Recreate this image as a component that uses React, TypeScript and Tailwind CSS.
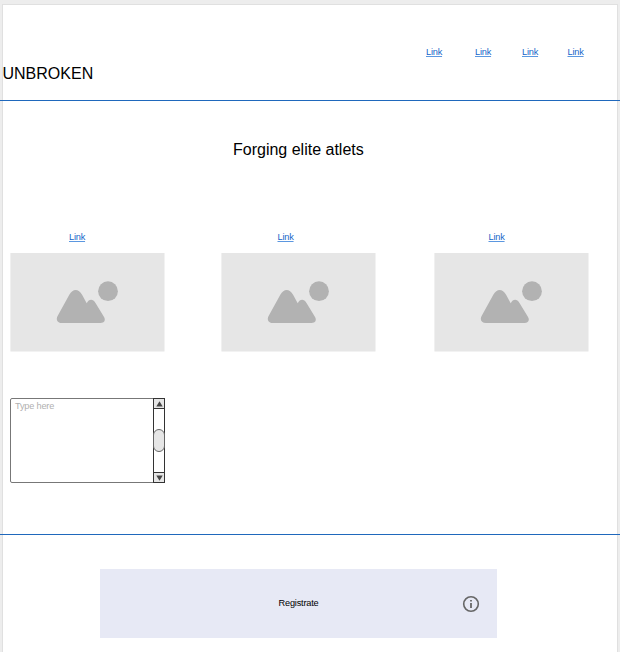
import React from "react";

function TextLink({ className = "" }: { className?: string }) {
  return (
    <a
      href="#"
      className={`block w-4 whitespace-nowrap text-[9.2px] leading-[10px] tracking-[-0.2px] text-[#1565c8] underline decoration-[#5b97e0] decoration-1 underline-offset-[0.5px] ${className}`}
    >
      Link
    </a>
  );
}

function ImagePlaceholder() {
  return (
    <svg className="block h-[99px] w-[155px]" viewBox="0 0 155 99" aria-hidden="true">
      <rect x="0.4" y="0" width="154.1" height="98.5" fill="#e6e6e6" />
      <circle cx="98" cy="38.2" r="9.9" fill="#b2b2b2" />
      <path
        d="M47.6 62.9 59.3 41.8C62.8 35.4 68.6 35.4 72.1 41.8L76.7 50.2C79.1 45.7 83 45.8 85.5 50L93.9 63.8C96 67.2 94.3 70 90.5 70H52C47.4 70 45.6 66.5 47.6 62.9Z"
        fill="#b2b2b2"
      />
    </svg>
  );
}

function Card({ className, linkClassName }: { className: string; linkClassName: string }) {
  return (
    <div className={`w-[155px] ${className}`}>
      <TextLink className={linkClassName} />
      <div className="mt-[11px]">
        <ImagePlaceholder />
      </div>
    </div>
  );
}

function ArrowButton({ down = false }: { down?: boolean }) {
  return (
    <div
      className={`flex h-[10px] shrink-0 items-center justify-center border-[#333] bg-[#e6e6e6] ${
        down ? "border-t" : "border-b"
      }`}
    >
      <svg className="h-[6px] w-[7px]" viewBox="0 0 7 6" aria-hidden="true">
        <path d={down ? "M0.3 0.5H6.7L3.5 5.7Z" : "M0.3 5.5H6.7L3.5 0.3Z"} fill="#444" />
      </svg>
    </div>
  );
}

function TextArea() {
  return (
    <div className="flex h-[85px] w-[155px] rounded-[2px] border border-[#777]">
      <div className="grow pl-1 pt-[2px] text-[9.2px] leading-[10px] tracking-[-0.2px] text-[#b0b0b0]">
        Type here
      </div>
      <div className="-m-px flex w-3 flex-col justify-between border border-[#333]">
        <ArrowButton />
        <div className="-mx-px h-[23px] rounded-[6px] border border-[#666] bg-[#e6e6e6]" />
        <ArrowButton down />
      </div>
    </div>
  );
}

export default function App() {
  return (
    <div className="flex h-[652px] w-[620px] flex-col overflow-hidden bg-[#ededed] pt-1 font-['Liberation_Sans',Arial,sans-serif] text-black">
      <header className="mx-[2px] h-24 shrink-0 border border-b-0 border-[#e0e0e0] bg-white">
        <nav className="flex pl-[423px] pt-[42px]">
          <TextLink />
          <TextLink className="ml-[33px]" />
          <TextLink className="ml-[31px]" />
          <TextLink className="ml-[29.5px]" />
        </nav>
        <h1 className="mt-[7px] -ml-[0.5px] text-base leading-[20px]">UNBROKEN</h1>
      </header>
      <hr className="h-px shrink-0 border-0 bg-[#1f68bc]" />
      <main className="mx-[2px] h-[433px] shrink-0 border-x border-[#e0e0e0] bg-white">
        <h2 className="pl-[230px] pt-[39px] text-base leading-[20px]">Forging elite atlets</h2>
        <div className="flex pl-[7px] pt-[72px]">
          <Card className="" linkClassName="ml-[59px]" />
          <Card className="ml-14" linkClassName="ml-[56.5px]" />
          <Card className="ml-[58px]" linkClassName="ml-[54.5px]" />
        </div>
        <div className="pl-[7px] pt-[46px]">
          <TextArea />
        </div>
      </main>
      <hr className="h-px shrink-0 border-0 bg-[#1f68bc]" />
      <footer className="mx-[2px] grow border-x border-[#e0e0e0] bg-white pl-[97px] pt-[34px]">
        <div className="grid h-[69px] w-[397px] grid-cols-[1fr_auto_1fr] items-center bg-[#e7e9f5]">
          <span className="col-start-2 -mt-px text-[9.2px] leading-[10px] tracking-[-0.2px]">Registrate</span>
          <svg className="mr-[17px] h-[18px] w-[18px] justify-self-end" viewBox="0 0 18 18" aria-hidden="true">
            <circle cx="9" cy="9" r="7.3" fill="none" stroke="#666" strokeWidth="1.6" />
            <path d="M8.1 5H9.9V6.6H8.1ZM8.1 8H9.9V13H8.1Z" fill="#666" />
          </svg>
        </div>
      </footer>
    </div>
  );
}
